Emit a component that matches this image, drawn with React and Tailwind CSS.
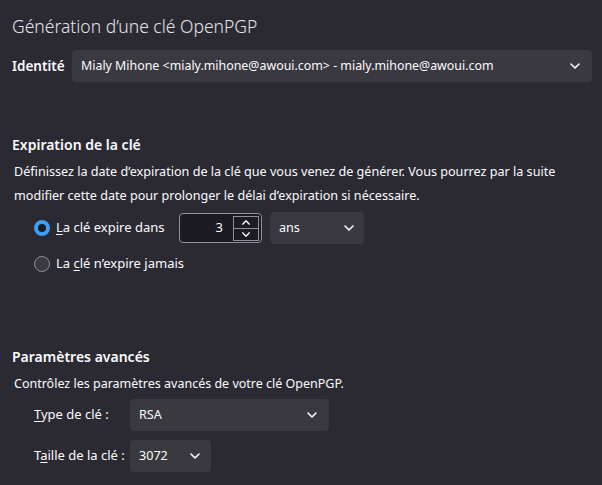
import React from "react";

const Chevron = ({ up = false, className = "" }) => (
  <svg width="12" height="8" viewBox="0 0 12 8" className={className} fill="none">
    <path
      d={up ? "M2 6 L6 2 L10 6" : "M2 2 L6 6 L10 2"}
      stroke="currentColor"
      strokeWidth="1.6"
      strokeLinecap="round"
      strokeLinejoin="round"
    />
  </svg>
);

const Select = ({ value, className = "" }) => (
  <div
    className={`flex items-center justify-between h-8 rounded-[4px] bg-[#3a3940] pl-[14px] pr-[11px] text-[12.6px] text-[#fbfbfe] ${className}`}
  >
    <span>{value}</span>
    <Chevron className="text-[#fbfbfe]" />
  </div>
);

const Radio = ({ checked }) =>
  checked ? (
    <span className="w-4 h-4 rounded-full border-[4px] border-[#3d9ef5] bg-[#1c1b22]" />
  ) : (
    <span className="w-4 h-4 rounded-full border border-[#8f8f9d] bg-[#3a3940]" />
  );

export default function App() {
  return (
    <div
      className="w-[602px] h-[485px] overflow-hidden bg-[#2b2a33] text-[#fbfbfe] flex flex-col"
      style={{ fontFamily: '"Segoe UI", "Noto Sans", "Open Sans", sans-serif' }}
    >
      <h1 className="mt-[12px] px-3 text-[17.5px] leading-7 font-light text-[#e4e4ea]">
        Génération d’une clé OpenPGP
      </h1>

      <div className="mt-[10px] flex items-center pl-3 pr-[10px]">
        <span className="w-[60px] text-[13.5px] font-semibold">Identité</span>
        <Select
          className="flex-1 !pl-[9px] !text-[12.4px]"
          value="Mialy Mihone <mialy.mihone@awoui.com> - mialy.mihone@awoui.com"
        />
      </div>

      <h2 className="mt-[53px] px-3 text-[14px] leading-5 font-semibold">Expiration de la clé</h2>
      <p className="mt-[5px] pl-[14px] pr-3 text-[12.6px] leading-6">
        Définissez la date d’expiration de la clé que vous venez de générer. Vous pourrez par la suite
        <br />
        modifier cette date pour prolonger le délai d’expiration si nécessaire.
      </p>

      <div className="mt-[4px] flex items-center h-8 pl-[34px] text-[13px]">
        <Radio checked />
        <span className="ml-[6px] w-[123px]">
          <span className="underline underline-offset-2">L</span>a clé expire dans
        </span>
        <div className="flex items-center w-[83px] h-[30px] rounded-[4px] border border-[#8f8f9d] bg-[#1c1b22] pr-[2px]">
          <span className="flex-1 text-right pr-[10px]">3</span>
          <div className="flex flex-col w-[26px] h-[25px] border border-[#8f8f9d]">
            <div className="flex-1 flex items-center justify-center border-b border-[#8f8f9d]">
              <Chevron up className="w-[10px] h-[7px]" />
            </div>
            <div className="flex-1 flex items-center justify-center">
              <Chevron className="w-[10px] h-[7px]" />
            </div>
          </div>
        </div>
        <Select className="ml-2 w-[94px] !pl-[9px] !pr-[9px]" value="ans" />
      </div>

      <div className="mt-[8px] flex items-center h-6 pl-[34px] text-[13px]">
        <Radio />
        <span className="ml-[6px]">
          La <span className="underline underline-offset-2">c</span>lé n’expire jamais
        </span>
      </div>

      <h2 className="mt-[71px] px-3 text-[14px] leading-5 font-semibold">Paramètres avancés</h2>
      <p className="mt-[5px] pl-[14px] text-[12.5px] leading-6">
        Contrôlez les paramètres avancés de votre clé OpenPGP.
      </p>

      <div className="mt-[3px] flex items-center pl-[34px] text-[13px]">
        <span className="w-[96px]">
          <span className="underline underline-offset-2">T</span>ype de clé :
        </span>
        <Select className="w-[199px] !pl-[9px]" value="RSA" />
      </div>
      <div className="mt-[9px] flex items-center pl-[34px] text-[13px]">
        <span className="w-[96px]">
          T<span className="underline underline-offset-2">a</span>ille de la clé :
        </span>
        <Select className="w-[81px] !pl-[9px] !pr-[10px]" value="3072" />
      </div>
    </div>
  );
}
